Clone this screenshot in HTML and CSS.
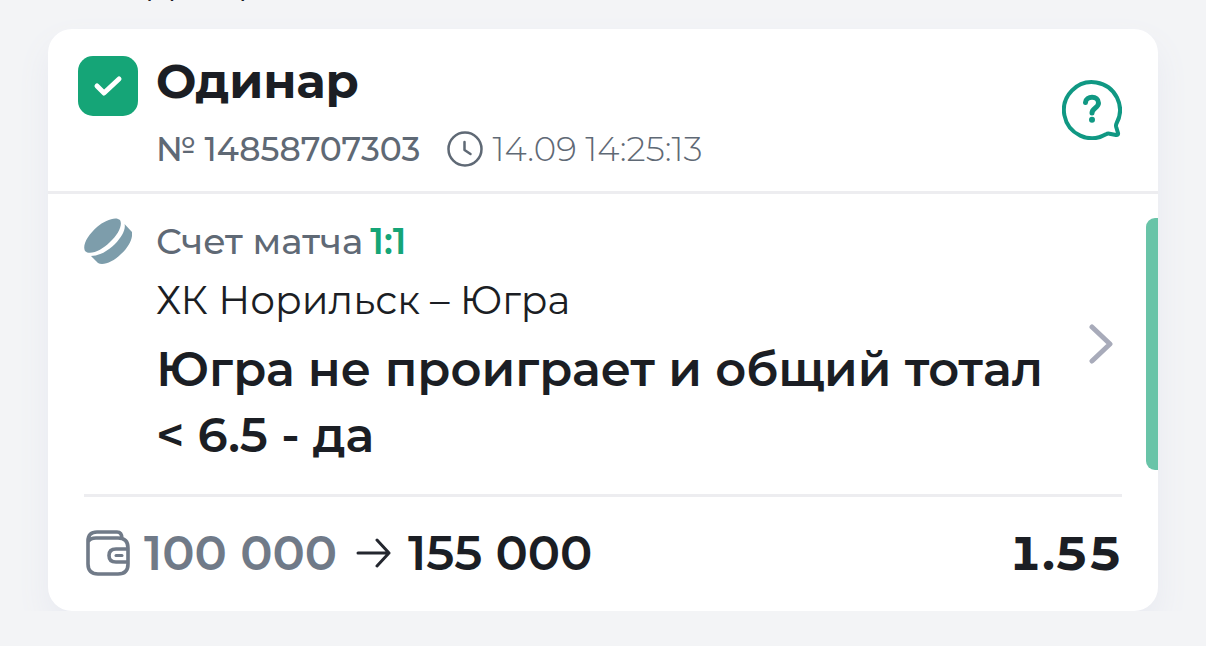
FILE: index.html
```html
<!DOCTYPE html>
<html lang="ru">
<head>
  <meta charset="UTF-8">
  <meta name="viewport" content="width=device-width, initial-scale=1.0">
  <title>Одинар</title>
  <link rel="stylesheet" href="styles.css">
</head>
<body>
  <div class="prev"><span>Дилер</span></div>
  <div class="wrap">
    <div class="card">
      <div class="head">
        <svg class="check" viewBox="0 0 60 60"><rect width="60" height="60" rx="15" fill="#15a577"/><path d="M19 30l7 7 15-14" fill="none" stroke="#fff" stroke-width="5" stroke-linecap="round" stroke-linejoin="round"/></svg>
        <div class="head-text">
          <h1>Одинар</h1>
          <div class="meta">
            <span class="num">№ 14858707303</span>
            <svg class="clock" viewBox="0 0 36 36"><circle cx="18" cy="18" r="16.500" fill="none" stroke="#5f6975" stroke-width="2.500"/><path d="M17.500 11v8l6 4" fill="none" stroke="#5f6975" stroke-width="2.500" stroke-linecap="round" stroke-linejoin="round"/></svg>
            <span class="date">14.09 14:25:13</span>
          </div>
        </div>
        <button class="help" type="button" aria-label="Помощь">
          <svg viewBox="0 0 60 60"><path d="M54.500 43.500A28 28 0 1 0 44 54.300Q45.500 53.300 47.500 53.700L54 55Q56.500 55.300 56 53L54.200 47Q53.700 45 54.500 43.500Z" fill="none" stroke="#109883" stroke-width="4" stroke-linejoin="round"/><path d="M23.500 22.500C24 15.500 36.500 15.500 36.500 23C36.500 28 30 28 30 33" fill="none" stroke="#109883" stroke-width="5" stroke-linecap="round"/><circle cx="30" cy="39.700" r="3" fill="#109883"/></svg>
        </button>
      </div>
      <div class="event">
        <svg class="puck" viewBox="0 0 48 48"><g fill="#7d9dab"><path d="M1 33C-2 27 4 17 13 9C21 2 32-2 36 2C39 7 34 17 26 24C18 32 6 38 1 33Z"/><path d="M40.500 6L48 14C49 20 45 29 37 36C29 44 19 48 14 45L7 38C15 38 24 33 31 26C38 19 42 11 40.500 6Z"/></g></svg>
        <div class="info">
          <p class="score">Счет матча <b>1:1</b></p>
          <p class="teams">ХК Норильск – Югра</p>
          <h2>Югра не проиграет и общий тотал &lt; 6.5 - да</h2>
        </div>
        <svg class="arrow" viewBox="0 0 24 40"><path d="M3 3l18 17L3 37" fill="none" stroke="#a8abba" stroke-width="5" stroke-linecap="round" stroke-linejoin="round"/></svg>
        <div class="status"></div>
      </div>
      <div class="sum">
        <svg class="wallet" viewBox="0 0 46 46"><g fill="none" stroke="#707a88" stroke-width="3.600"><path d="M4 12Q6 8 12 8H34Q44 8 44 18V34Q44 44 34 44H14Q4 44 4 34V11Q4 2 13 2H33Q38 2 38 9"/><path d="M44 19H32Q25 19 25 25.500T32 32H44"/></g><path d="M32 25.500h6" stroke="#707a88" stroke-width="3" stroke-linecap="round"/></svg>
        <span class="bet">100 000</span>
        <svg class="to" viewBox="0 0 36 30"><path d="M2 15h31M21 2l12 13-12 13" fill="none" stroke="#24272f" stroke-width="3" stroke-linecap="round" stroke-linejoin="round"/></svg>
        <span class="win">155 000</span>
        <span class="odds">1.55</span>
      </div>
    </div>
  </div>
</body>
</html>
```

FILE: styles.css
```css
*{
  margin: 0;
  padding: 0;
  box-sizing: border-box;
}
body{
  background-color: #f3f4f6;
  color: #1b1e24;
  font-family: Montserrat, Inter, sans-serif;
}
svg{
  display: block;
  flex: none;
}
.prev{
  display: flex;
  align-items: flex-end;
  height: 1px;
  padding-left: 148px;
  overflow: hidden;
  font-size: 33px;
  line-height: 30px;
}
.wrap{
  padding: 28px 48px 0;
  overflow: hidden;
}
.card{
  background-color: #fff;
  border-radius: 24px;
  box-shadow: 0 16px 32px #e8eaf1;
}
.head{
  display: flex;
  align-items: flex-start;
  height: 165px;
  padding: 27px 36px 0 30px;
  border-bottom: 3px solid #ededf0;
}
.check{
  width: 60px;
  height: 60px;
}
.head-text{
  flex: 1;
  padding-left: 18px;
}
h1{
  font-size: 48px;
  line-height: 50px;
  font-weight: 700;
}
.meta{
  display: flex;
  align-items: center;
  margin-top: 25px;
  font-size: 33px;
  line-height: 36px;
  color: #5f6975;
}
.num{
  font-weight: 500;
}
.clock{
  width: 36px;
  height: 36px;
  margin: 0 9px 0 27px;
}
.date{
  font-size: 34px;
  font-weight: 300;
}
.help{
  width: 60px;
  height: 60px;
  margin-top: 24px;
  border: 0;
  background: none;
}
.event{
  display: flex;
  position: relative;
  margin: 0 36px;
  padding: 24px 0;
  border-bottom: 3px solid #ededf0;
}
.puck{
  width: 48px;
  height: 48px;
}
.info{
  flex: 1;
  padding: 0 40px 0 24px;
}
.score{
  display: flex;
  gap: 7px;
  font-size: 36px;
  line-height: 46px;
  font-weight: 500;
  color: #5f6975;
}
.score b{
  font-weight: 600;
  color: #15a577;
}
.teams{
  padding-top: 12px;
  font-size: 39px;
  line-height: 48px;
  font-weight: 400;
}
h2{
  padding: 12px 0 2px;
  font-size: 48px;
  line-height: 66px;
  font-weight: 600;
}
.arrow{
  width: 24px;
  height: 40px;
  align-self: center;
  margin-right: 9px;
}
.status{
  position: absolute;
  top: 24px;
  right: -36px;
  bottom: 24px;
  width: 12px;
  border-radius: 9px 0 0 9px;
  background-color: #69c4a8;
}
.sum{
  display: flex;
  align-items: center;
  padding: 27px 36px 29px;
  font-size: 48px;
  line-height: 58px;
  font-weight: 600;
}
.wallet{
  width: 46px;
  height: 46px;
}
.bet{
  padding-left: 14px;
  color: #707a88;
}
.to{
  width: 36px;
  height: 30px;
  margin: 0 16px 0 19px;
}
.odds{
  margin-left: auto;
  font-weight: 700;
  font-variant-numeric: tabular-nums;
}
```
